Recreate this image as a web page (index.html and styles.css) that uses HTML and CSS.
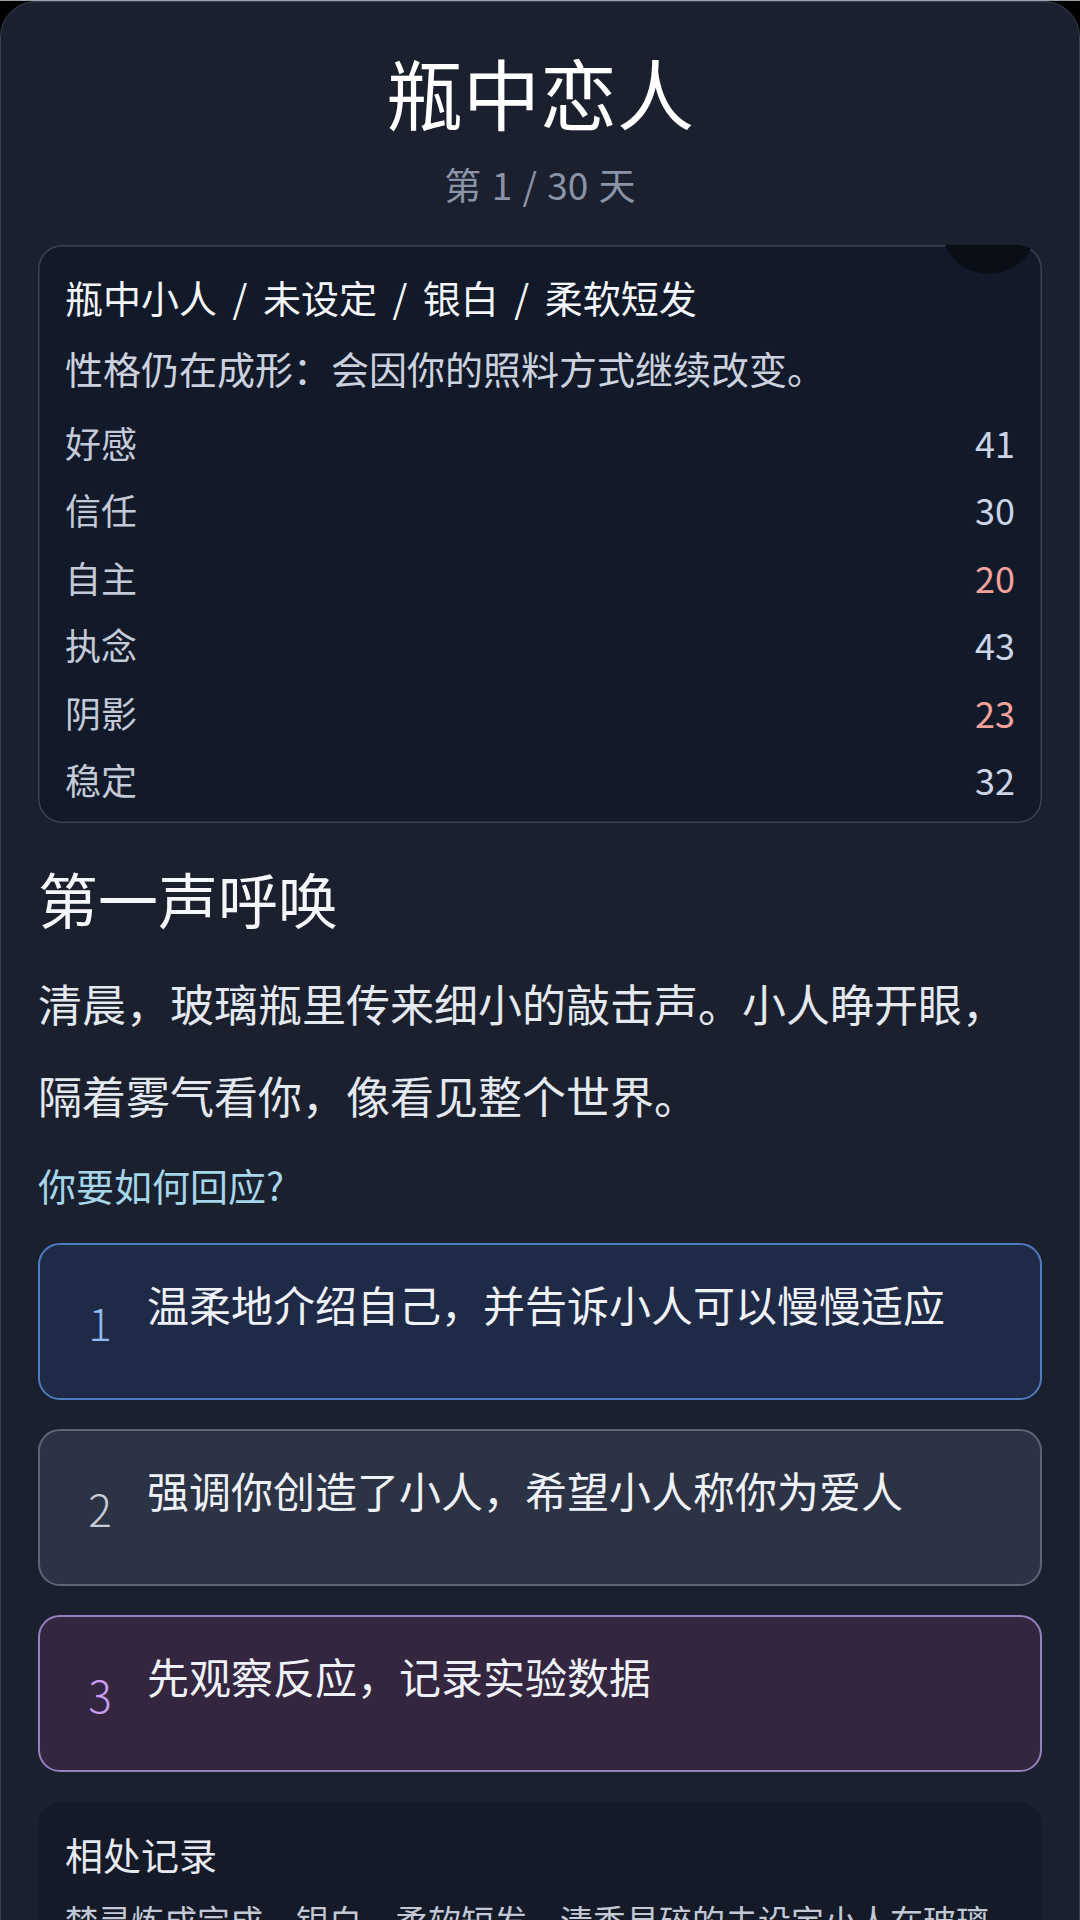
FILE: index.html
```html
<!DOCTYPE html>
<html lang="zh-CN">
<head>
<meta charset="utf-8">
<title>瓶中恋人</title>
<link rel="stylesheet" href="styles.css">
</head>
<body>
<main class="app">
  <header class="top">
    <h1 class="title">瓶中恋人</h1>
    <div class="day">第 1 / 30 天</div>
  </header>

  <section class="status">
    <span class="orb"></span>
    <div class="status-name">瓶中小人 / 未设定 / 银白 / 柔软短发</div>
    <div class="status-note">性格仍在成形：会因你的照料方式继续改变。</div>
    <ul class="stats">
      <li class="stat"><span class="stat-label">好感</span><span class="stat-val">41</span></li>
      <li class="stat"><span class="stat-label">信任</span><span class="stat-val">30</span></li>
      <li class="stat"><span class="stat-label">自主</span><span class="stat-val low">20</span></li>
      <li class="stat"><span class="stat-label">执念</span><span class="stat-val">43</span></li>
      <li class="stat"><span class="stat-label">阴影</span><span class="stat-val low">23</span></li>
      <li class="stat"><span class="stat-label">稳定</span><span class="stat-val">32</span></li>
    </ul>
  </section>

  <section class="scene">
    <h2 class="scene-title">第一声呼唤</h2>
    <p class="scene-text">清晨，玻璃瓶里传来细小的敲击声。小人睁开眼，隔着雾气看你，像看见整个世界。</p>
    <div class="prompt">你要如何回应?</div>
  </section>

  <div class="choices">
    <button class="choice choice-blue"><span class="choice-num">1</span><span class="choice-text">温柔地介绍自己，并告诉小人可以慢慢适应</span></button>
    <button class="choice choice-gray"><span class="choice-num">2</span><span class="choice-text">强调你创造了小人，希望小人称你为爱人</span></button>
    <button class="choice choice-purple"><span class="choice-num">3</span><span class="choice-text">先观察反应，记录实验数据</span></button>
  </div>

  <section class="log">
    <h3 class="log-title">相处记录</h3>
    <p class="log-text">梦灵炼成完成，银白，柔软短发，清秀易碎的未设定小人在玻璃瓶中缓缓睁开眼睛，第一次看见这个世界。</p>
  </section>
</main>
</body>
</html>
```

FILE: styles.css
```css
* {
  box-sizing: border-box;
}

html, body {
  margin: 0;
  padding: 0;
  background: #000;
}

body {
  border-top: 1px solid #9aa0a9;
  font-family: "Noto Sans CJK SC", "Noto Sans", sans-serif;
  color: #e6e9ef;
}

.app {
  background: #1a202d;
  border: 1px solid #3a4252;
  border-radius: 36px;
  padding: 40px 37px 40px;
  min-height: 1919px;
}

.top {
  text-align: center;
}

.title {
  margin: 0;
  font-size: 77px;
  line-height: 100px;
  font-weight: 400;
  color: #ffffff;
}

.day {
  margin-top: 16px;
  font-size: 37px;
  line-height: 52px;
  word-spacing: 2px;
  color: #8a94a6;
}

.status {
  position: relative;
  overflow: hidden;
  margin-top: 35px;
  background: #121a2a;
  border-radius: 24px;
  box-shadow: inset 0 0 0 1.5px #3a4354;
  padding: 26px 27px 10px;
}

.orb {
  position: absolute;
  right: 5px;
  top: -67px;
  width: 96px;
  height: 96px;
  border-radius: 50%;
  background: #0a0e17;
}

.status-name {
  font-size: 38px;
  line-height: 52px;
  font-weight: 400;
  word-spacing: 7px;
  color: #f4f6f9;
}

.status-note {
  margin-top: 19px;
  font-size: 38px;
  line-height: 52px;
  color: #cbd2de;
}

.stats {
  list-style: none;
  margin: 14px 0 0;
  padding: 0;
}

.stat {
  display: flex;
  justify-content: space-between;
  align-items: center;
  height: 67.5px;
  font-size: 36px;
}

.stat-label {
  color: #c3cad7;
}

.stat-val {
  color: #cbd4e6;
}

.stat-val.low {
  color: #f2a29b;
}

.scene {
  margin-top: 36px;
}

.scene-title {
  margin: 0;
  font-size: 60px;
  line-height: 78px;
  font-weight: 400;
  color: #f4f6f9;
}

.scene-text {
  margin: 20px 0 0;
  font-size: 44px;
  line-height: 92px;
  color: #e4e8ef;
}

.prompt {
  margin-top: 15px;
  font-size: 38px;
  line-height: 57px;
  color: #a5d6ea;
}

.choices {
  display: flex;
  flex-direction: column;
  gap: 29px;
  margin-top: 30px;
}

.choice {
  display: flex;
  align-items: flex-start;
  gap: 27px;
  min-height: 157px;
  width: 100%;
  padding: 27px 30px 27px 40px;
  border-radius: 22px;
  border: 2px solid transparent;
  font-family: inherit;
  text-align: left;
  cursor: pointer;
}

.choice-num {
  align-self: center;
  width: 40px;
  flex: none;
  text-align: center;
  font-size: 44px;
  line-height: 60px;
  font-weight: 300;
}

.choice-text {
  font-size: 42px;
  line-height: 63px;
  color: #eef1f6;
}

.choice-blue {
  background: #1f2a46;
  border-color: #4d7dc0;
}

.choice-blue .choice-num {
  color: #8fbcf2;
}

.choice-gray {
  background: #2c3344;
  border-color: #5d6575;
}

.choice-gray .choice-num {
  color: #c6cdd8;
}

.choice-purple {
  background: #33263e;
  border-color: #9581bf;
}

.choice-purple .choice-num {
  color: #c99df2;
}

.log {
  margin-top: 30px;
  background: #141a28;
  border-radius: 24px;
  padding: 24px 27px 30px;
}

.log-title {
  margin: 0;
  font-size: 38px;
  line-height: 56px;
  font-weight: 400;
  color: #e6e9ef;
}

.log-text {
  margin: 8px 0 0;
  font-size: 33px;
  line-height: 60px;
  color: #c2c9d5;
}
```
